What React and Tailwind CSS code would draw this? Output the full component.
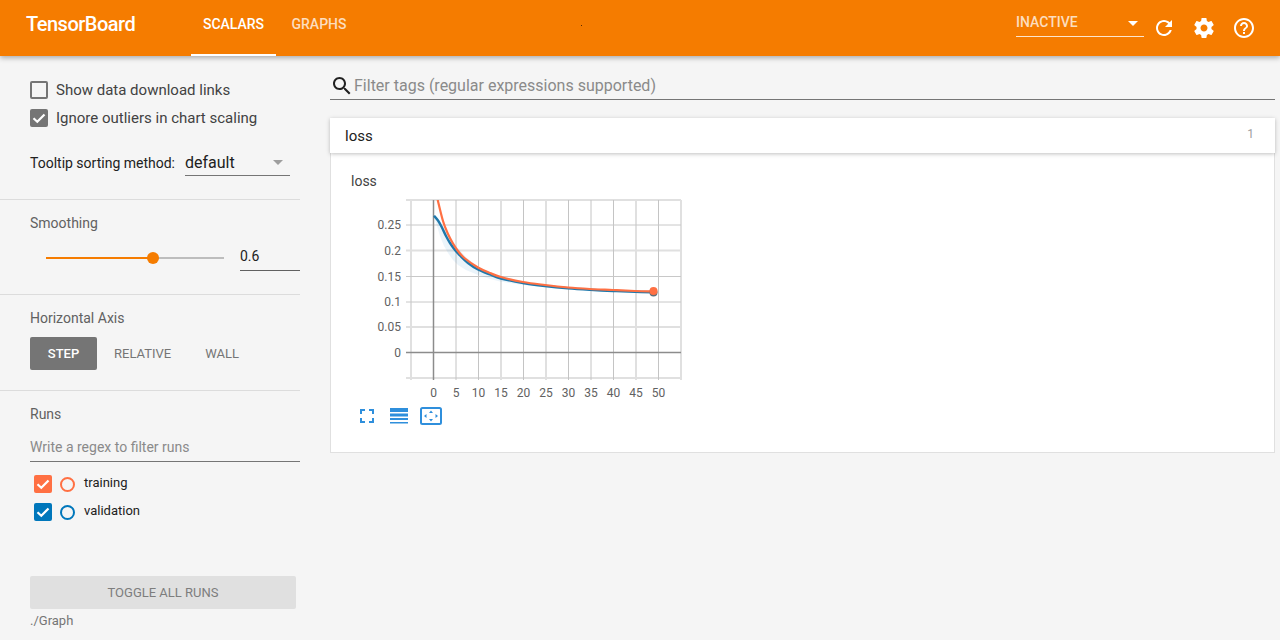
import React from 'react';

const REFRESH = 'M17.65 6.35C16.2 4.9 14.21 4 12 4c-4.42 0-7.99 3.58-7.99 8s3.57 8 7.99 8c3.73 0 6.84-2.55 7.73-6h-2.08c-.82 2.33-3.04 4-5.65 4-3.31 0-6-2.69-6-6s2.69-6 6-6c1.66 0 3.14.69 4.22 1.78L13 11h7V4l-2.35 2.35z';
const SETTINGS = 'M19.43 12.98c.04-.32.07-.64.07-.98s-.03-.66-.07-.98l2.11-1.65c.19-.15.24-.42.12-.64l-2-3.46c-.12-.22-.39-.3-.61-.22l-2.49 1c-.52-.4-1.08-.73-1.69-.98l-.38-2.65C14.46 2.18 14.25 2 14 2h-4c-.25 0-.46.18-.49.42l-.38 2.65c-.61.25-1.17.59-1.69.98l-2.49-1c-.23-.09-.49 0-.61.22l-2 3.46c-.13.22-.07.49.12.64l2.11 1.65c-.04.32-.07.65-.07.98s.03.66.07.98l-2.11 1.65c-.19.15-.24.42-.12.64l2 3.46c.12.22.39.3.61.22l2.49-1c.52.4 1.08.73 1.69.98l.38 2.65c.03.24.24.42.49.42h4c.25 0 .46-.18.49-.42l.38-2.65c.61-.25 1.17-.59 1.69-.98l2.49 1c.23.09.49 0 .61-.22l2-3.46c.12-.22.07-.49-.12-.64l-2.11-1.65zM12 15.5c-1.93 0-3.5-1.57-3.5-3.5s1.57-3.5 3.5-3.5 3.5 1.57 3.5 3.5-1.57 3.5-3.5 3.5z';
const HELP = 'M11 18h2v-2h-2v2zm1-16C6.48 2 2 6.48 2 12s4.48 10 10 10 10-4.48 10-10S17.52 2 12 2zm0 18c-4.41 0-8-3.59-8-8s3.59-8 8-8 8 3.59 8 8-3.59 8-8 8zm0-14c-2.21 0-4 1.79-4 4h2c0-1.1.9-2 2-2s2 .9 2 2c0 2-3 1.75-3 5h2c0-2.25 3-2.5 3-5 0-2.21-1.79-4-4-4z';
const SEARCH = 'M15.5 14h-.79l-.28-.27C15.41 12.59 16 11.11 16 9.5 16 5.91 13.09 3 9.5 3S3 5.91 3 9.5 5.91 16 9.5 16c1.61 0 3.09-.59 4.23-1.57l.27.28v.79l5 4.99L20.49 19l-4.99-5zm-6 0C7.01 14 5 11.99 5 9.5S7.01 5 9.5 5 14 7.01 14 9.5 11.99 14 9.5 14z';

function Icon({ d, className }) {
  return (
    <svg viewBox="0 0 24 24" className={className} fill="currentColor">
      <path d={d} />
    </svg>
  );
}

function Check({ className }) {
  return (
    <svg viewBox="0 0 18 18" className={className} fill="none" stroke="white" strokeWidth="2.2">
      <path d="M3.5 9.2l3.8 3.6 7.2-7.4" />
    </svg>
  );
}

function Header() {
  return (
    <header className="relative z-10 h-14 bg-[#f57c00] flex items-center shadow-[0_2px_5px_rgba(0,0,0,0.3)] text-white shrink-0">
      <div className="w-[191px] pl-[26px] pb-2 text-[20px] font-medium tracking-[-0.5px]">TensorBoard</div>
      <div className="h-14 w-[85px] flex items-center justify-center text-sm font-medium border-b-2 border-white pb-[6px]">SCALARS</div>
      <div className="h-14 w-[86px] flex items-center justify-center text-sm font-medium text-white/75 pb-[9px]">GRAPHS</div>
      <div className="absolute left-[581px] top-[25px] w-px h-px bg-[#5a2a00]" />
      <div className="ml-auto flex items-center h-14">
        <div className="self-start mt-2 w-32 h-[29px] border-b border-white/80 flex items-center justify-between text-sm font-medium text-white/75">
          <span>INACTIVE</span>
          <span className="mr-[6px] mt-[2px] w-0 h-0 border-x-[5px] border-x-transparent border-t-[5px] border-t-white" />
        </div>
        <Icon d={REFRESH} className="w-6 h-6 ml-2" />
        <Icon d={SETTINGS} className="w-6 h-6 ml-4" />
        <Icon d={HELP} className="w-6 h-6 ml-4 mr-6" />
      </div>
    </header>
  );
}

function Sidebar() {
  return (
    <aside className="w-[330px] shrink-0 pr-[30px] flex flex-col text-[#424242]">
      <section className="h-[144px] border-b border-[#dcdcdc] pl-[30px] pt-[25px]">
        <div className="flex items-center h-[18px] gap-2 text-[15px]">
          <span className="w-[18px] h-[18px] border-2 border-[#757575] rounded-[2px]" />
          <span>Show data download links</span>
        </div>
        <div className="flex items-center h-[18px] gap-2 text-[15px] mt-[10px]">
          <span className="w-[18px] h-[18px] bg-[#757575] rounded-[2px] flex items-center justify-center">
            <Check className="w-[18px] h-[18px]" />
          </span>
          <span>Ignore outliers in chart scaling</span>
        </div>
        <div className="flex items-center mt-[20px] h-[29px] text-[#212121]">
          <span className="text-sm w-[155px] pt-[3px]">Tooltip sorting method:</span>
          <span className="w-[105px] h-[29px] border-b border-[#757575] flex items-center justify-between text-base">
            <span className="pt-[3px]">default</span>
            <span className="mr-[7px] mt-[2px] w-0 h-0 border-x-[5px] border-x-transparent border-t-[5px] border-t-[#9e9e9e]" />
          </span>
        </div>
      </section>

      <section className="h-[95px] border-b border-[#dcdcdc] pl-[30px] pt-[14px]">
        <div className="text-sm leading-[18px] text-[#616161]">Smoothing</div>
        <div className="flex items-center mt-[9px]">
          <div className="ml-4 mt-[4px] w-[178px] h-[2px] bg-[#bdbdbd] flex items-center">
            <div className="w-[107px] h-[2px] bg-[#f57c00]" />
            <div className="w-3 h-3 rounded-full bg-[#f57c00] -ml-[6px]" />
          </div>
          <div className="ml-4 w-[60px] h-[30px] border-b border-[#616161] text-sm leading-5 text-[#212121] pt-[5px]">0.6</div>
        </div>
      </section>

      <section className="h-[96px] border-b border-[#dcdcdc] pl-[30px] pt-[14px]">
        <div className="text-sm leading-[18px] text-[#616161]">Horizontal Axis</div>
        <div className="flex items-center mt-[10px] text-[13px] text-[#757575]">
          <span className="w-[67px] h-[33px] bg-[#757575] text-white font-medium rounded-[2px] flex items-center justify-center">STEP</span>
          <span className="ml-[17px]">RELATIVE</span>
          <span className="ml-[34px]">WALL</span>
        </div>
      </section>

      <section className="flex-1 pl-[30px] pt-[14px] flex flex-col">
        <div className="text-sm leading-[18px] text-[#616161]">Runs</div>
        <div className="h-[33px] mt-[6px] border-b border-[#757575] text-sm leading-5 text-[#8a8a8a] pt-[8px]">Write a regex to filter runs</div>
        <div className="flex items-center h-[18px] mt-[13px] ml-1 text-[13px] text-[#212121]">
          <span className="w-[18px] h-[18px] bg-[#ff7043] rounded-[2px] flex items-center justify-center">
            <Check className="w-[18px] h-[18px]" />
          </span>
          <span className="w-[15px] h-[15px] rounded-full border-2 border-[#ff7043] ml-[8px]" />
          <span className="ml-[9px] -mt-[2px]">training</span>
        </div>
        <div className="flex items-center h-[18px] mt-[10px] ml-1 text-[13px] text-[#212121]">
          <span className="w-[18px] h-[18px] bg-[#0077bb] rounded-[2px] flex items-center justify-center">
            <Check className="w-[18px] h-[18px]" />
          </span>
          <span className="w-[15px] h-[15px] rounded-full border-2 border-[#0077bb] ml-[8px]" />
          <span className="ml-[9px] -mt-[2px]">validation</span>
        </div>
        <div className="mt-[55px] w-[266px] h-[33px] bg-[#e0e0e0] rounded-[2px] flex items-center justify-center text-[13px] text-[#7d7d7d]">TOGGLE ALL RUNS</div>
        <div className="mt-[3px] text-[13px] leading-[18px] text-[#757575]">./Graph</div>
      </section>
    </aside>
  );
}

const ORANGE = [[437, 197], [443, 221], [448, 234], [453, 243.5], [458, 251], [465, 258.5], [478, 267.5], [490, 273], [501, 277], [523, 282], [545, 285], [568, 287.5], [590, 289], [613, 290], [635, 291], [654, 291.5]];
const BLUE = [[434, 215.7], [438, 220.5], [441.7, 227], [446, 236], [450, 243], [455, 250], [460, 255.5], [468, 263], [478, 269.5], [490, 274.5], [501, 278.5], [523, 283], [545, 286], [568, 288.3], [590, 289.8], [613, 291], [635, 291.8], [654, 292.3]];
const BAND = '434,216 437,226 440,236 444,246 448,253 453,260 458,265 466,270 478,275 490,279 500,281.5 523,285 545,287 568,289 613,292 654,293.5 654,291 613,289.5 568,287.5 523,281.5 500,276 478,267 466,257 456,246 448,235 440,221';

// catmull-rom through the points, so the curve has no kinks
function smooth(pts) {
  let d = `M${pts[0][0]} ${pts[0][1]}`;
  for (let i = 0; i < pts.length - 1; i++) {
    const p0 = pts[i - 1] || pts[i];
    const p1 = pts[i];
    const p2 = pts[i + 1];
    const p3 = pts[i + 2] || p2;
    const c1x = p1[0] + (p2[0] - p0[0]) / 6;
    const c1y = p1[1] + (p2[1] - p0[1]) / 6;
    const c2x = p2[0] - (p3[0] - p1[0]) / 6;
    const c2y = p2[1] - (p3[1] - p1[1]) / 6;
    d += `C${c1x} ${c1y} ${c2x} ${c2y} ${p2[0]} ${p2[1]}`;
  }
  return d;
}

function Chart() {
  // svg coordinates are page coordinates, shifted by the viewBox
  const darkX = [456, 478.5, 523.5, 568.5, 591, 613.5, 658.5];
  const lightX = [411, 501, 546, 636, 681];
  const darkY = [225, 276.5, 302];
  const lightY = [200, 250.5, 327, 378];
  const xLabels = [0, 5, 10, 15, 20, 25, 30, 35, 40, 45, 50];
  const yLabels = [['0.25', 225], ['0.2', 250.5], ['0.15', 276.5], ['0.1', 302], ['0.05', 327], ['0', 352.5]];

  return (
    <svg viewBox="351 196 340 204" className="w-[340px] h-[204px] block mt-[6px]">
      <clipPath id="plot"><rect x="411" y="200" width="270" height="180" /></clipPath>
      {lightX.map((x) => <line key={x} x1={x} x2={x} y1="200" y2="380" stroke="#e0e0e0" strokeWidth="2" />)}
      {lightY.map((y) => <line key={y} x1="406" x2="681" y1={y} y2={y} stroke="#e0e0e0" strokeWidth="2" />)}
      {darkX.map((x) => <line key={x} x1={x} x2={x} y1="200" y2="380" stroke="#c4c4c4" />)}
      {darkY.map((y) => <line key={y} x1="406" x2="681" y1={y} y2={y} stroke="#c8c8c8" />)}
      <line x1="433.5" x2="433.5" y1="200" y2="380" stroke="#8c8c8c" strokeWidth="1.5" />
      <line x1="406" x2="681" y1="352.5" y2="352.5" stroke="#8c8c8c" strokeWidth="1.5" />
      <polygon points={BAND} fill="#0077bb" fillOpacity="0.08" />
      <path d={smooth(BLUE)} fill="none" stroke="#1f78ab" strokeWidth="2.4" />
      <path d={smooth(ORANGE)} fill="none" stroke="#ff7043" strokeWidth="2.2" clipPath="url(#plot)" />
      <circle cx="653.5" cy="292.5" r="4" fill="#5f6f7a" />
      <circle cx="653.5" cy="291" r="4" fill="#ff7043" />
      {yLabels.map(([t, y]) => (
        <text key={t} x="401" y={y + 4} textAnchor="end" fontSize="12" fill="#616161" fontFamily="Roboto, sans-serif">{t}</text>
      ))}
      {xLabels.map((t, i) => (
        <text key={t} x={433.5 + i * 22.5} y="397" textAnchor="middle" fontSize="12" fill="#616161" fontFamily="Roboto, sans-serif">{t}</text>
      ))}
    </svg>
  );
}

function ChartActions() {
  return (
    <div className="flex items-center ml-[8px] mt-[7px]">
      <svg viewBox="0 0 16 16" className="w-4 h-4" fill="none" stroke="#2f8fdc" strokeWidth="2">
        <path d="M2 6V2h4M10 2h4v4M14 10v4h-4M6 14H2v-4" />
      </svg>
      <svg viewBox="0 0 20 16" className="w-[20px] h-4 ml-[14px]" fill="#2f8fdc">
        <rect x="1" y="0" width="18" height="4" />
        <rect x="1" y="5.5" width="18" height="3" />
        <rect x="1" y="10" width="18" height="2" />
        <rect x="1" y="14" width="18" height="1.5" />
      </svg>
      <svg viewBox="0 0 22 18" className="w-[22px] h-[18px] ml-[11px]" fill="#2f8fdc">
        <rect x="1" y="1" width="20" height="16" rx="1.5" fill="none" stroke="#2f8fdc" strokeWidth="2" />
        <path d="M11 3.5l2 2.5h-4zM11 14.5l2-2.5h-4zM4 9l2.5-2v4zM18 9l-2.5-2v4z" />
      </svg>
    </div>
  );
}

function Main() {
  return (
    <main className="flex-1 pr-[5px]">
      <div className="h-[44px] border-b border-[#757575] flex items-center text-base text-[#8a8a8a] pt-[17px] mb-[18px]">
        <Icon d={SEARCH} className="w-6 h-6 text-[#212121] -mt-[1px]" />
        <span>Filter tags (regular expressions supported)</span>
      </div>
      <div className="relative h-[35px] bg-white shadow-[0_1px_4px_rgba(0,0,0,0.25)] flex items-center justify-between px-[15px] text-[#212121]">
        <span className="text-[15px] mt-[2px]">loss</span>
        <span className="text-xs text-[#a0a0a0] mr-[6px] -mt-[4px]">1</span>
      </div>
      <div className="h-[300px] bg-white border border-t-0 border-[#e0e0e0] pl-[20px] pt-[19px]">
        <div className="text-sm leading-[18px] text-[#424242]">loss</div>
        <Chart />
        <ChartActions />
      </div>
    </main>
  );
}

export default function App() {
  return (
    <div className="w-[1280px] h-[640px] overflow-hidden bg-[#f5f5f5] flex flex-col font-['Roboto',sans-serif]">
      <Header />
      <div className="flex flex-1 min-h-0">
        <Sidebar />
        <Main />
      </div>
    </div>
  );
}
